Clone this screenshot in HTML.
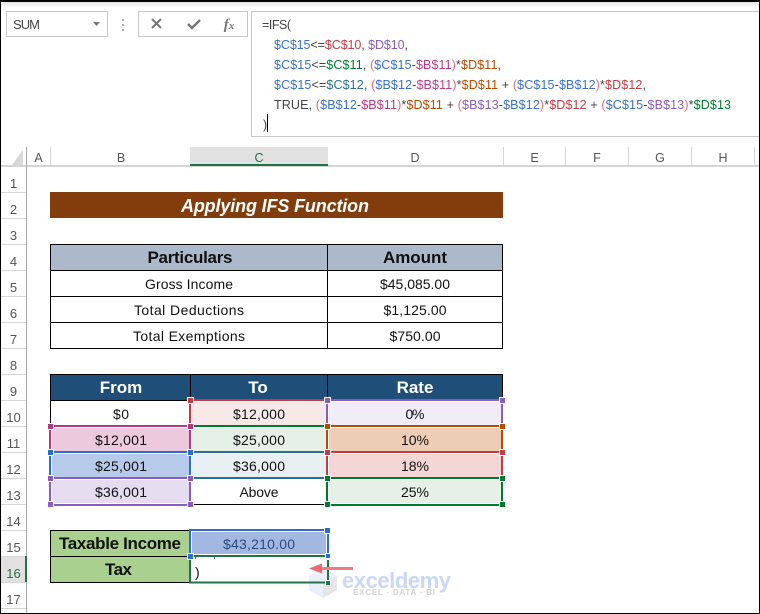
<!DOCTYPE html>
<html><head><meta charset="utf-8"><style>
html,body{margin:0;padding:0;background:#fff;width:760px;height:614px;overflow:hidden}
svg{display:block}
text{font-family:"Liberation Sans",sans-serif;font-size:14px;fill:#111;text-anchor:middle}
.h{font-weight:bold;font-size:17px}
.w{fill:#fff}
.r{fill:#555;font-size:13px}
.c{fill:#555;font-size:12.5px}
.f{font-size:12.5px;text-anchor:start;fill:#444}
.b{fill:#3b6fd0}.rd{fill:#cc3a45}.p{fill:#8a5cc0}.g{fill:#007a2e}.m{fill:#b83a86}.o{fill:#b84a00}.t{fill:#2a7090}.pk{fill:#d9707a}
.hd{stroke:#fff;stroke-width:1}
</style></head><body>
<svg width="760" height="614" viewBox="0 0 760 614" xmlns="http://www.w3.org/2000/svg">
<defs><linearGradient id="tg" x1="0" y1="0" x2="0" y2="1"><stop offset="0" stop-color="#e4e4e4"/><stop offset="1" stop-color="#fff"/></linearGradient></defs>
<rect width="760" height="614" fill="#fff"/>
<rect x="0" y="2" width="760" height="6" fill="url(#tg)"/>
<!-- formula bar -->
<rect x="6.5" y="11.5" width="101" height="25" fill="#fff" stroke="#c6c6c6"/>
<text x="13" y="29" style="text-anchor:start;fill:#444;font-size:13px" textLength="27">SUM</text>
<path d="M93 22h7l-3.500 4z" fill="#777"/>
<rect x="122" y="19" width="2" height="2" fill="#aaa"/><rect x="122" y="24" width="2" height="2" fill="#aaa"/><rect x="122" y="29" width="2" height="2" fill="#aaa"/>
<rect x="138.500" y="11.500" width="109" height="25" fill="#fff" stroke="#c6c6c6"/>
<path d="M152 19l9 9M161 19l-9 9" stroke="#777" stroke-width="2" fill="none"/>
<path d="M188 24l4 4 8-8" stroke="#777" stroke-width="2.500" fill="none"/>
<text x="229" y="29" style="font-family:'Liberation Serif',serif;font-style:italic;font-weight:bold;font-size:15px;fill:#777">f<tspan style="font-size:11px;font-family:'Liberation Serif',serif;fill:#777">x</tspan></text>
<rect x="251.500" y="11.500" width="520" height="125" fill="#fff" stroke="#c6c6c6"/>
<text class="f" x="262" y="29" textLength="29">=IFS(</text>
<text class="f" x="274" y="49" textLength="134"><tspan class="b">$C$15</tspan>&lt;=<tspan class="rd">$C$10</tspan>, <tspan class="p">$D$10</tspan>,</text>
<text class="f" x="274" y="69" textLength="227"><tspan class="b">$C$15</tspan>&lt;=<tspan class="g">$C$11</tspan>, <tspan class="pk">(</tspan><tspan class="b">$C$15</tspan>-<tspan class="m">$B$11</tspan><tspan class="pk">)</tspan>*<tspan class="o">$D$11</tspan>,</text>
<text class="f" x="274" y="89" textLength="372"><tspan class="b">$C$15</tspan>&lt;=<tspan class="t">$C$12</tspan>, <tspan class="pk">(</tspan><tspan class="b">$B$12</tspan>-<tspan class="m">$B$11</tspan><tspan class="pk">)</tspan>*<tspan class="o">$D$11</tspan> + <tspan class="pk">(</tspan><tspan class="b">$C$15</tspan>-<tspan class="b">$B$12</tspan><tspan class="pk">)</tspan>*<tspan class="rd">$D$12</tspan>,</text>
<text class="f" x="274" y="109" textLength="457">TRUE, <tspan class="pk">(</tspan><tspan class="b">$B$12</tspan>-<tspan class="m">$B$11</tspan><tspan class="pk">)</tspan>*<tspan class="o">$D$11</tspan> + <tspan class="pk">(</tspan><tspan class="p">$B$13</tspan>-<tspan class="b">$B$12</tspan><tspan class="pk">)</tspan>*<tspan class="rd">$D$12</tspan> + <tspan class="pk">(</tspan><tspan class="b">$C$15</tspan>-<tspan class="p">$B$13</tspan><tspan class="pk">)</tspan>*<tspan class="g">$D$13</tspan></text>
<text class="f" x="263" y="129">)</text>
<rect x="267" y="114" width="1" height="18" fill="#000"/>
<!-- column headers -->
<path d="M23 150v15h-11z" fill="#d8d8d8"/>
<rect x="190" y="147" width="138" height="18" fill="#e1e1e1"/>
<path d="M50.500 147v18M503.500 147v18M565.500 147v18M628.500 147v18M691.500 147v18M754.500 147v18" stroke="#d6d6d6"/>
<rect x="0" y="165.500" width="760" height="1" fill="#a8a8a8"/>
<rect x="190" y="164" width="138" height="2" fill="#217346"/>
<text class="c" x="38.500" y="162">A</text><text class="c" x="121" y="162">B</text><text class="c" x="259" y="162" style="fill:#217346">C</text><text class="c" x="415" y="162">D</text><text class="c" x="534.500" y="162">E</text><text class="c" x="597" y="162">F</text><text class="c" x="660" y="162">G</text><text class="c" x="723" y="162">H</text>
<!-- row headers -->
<rect x="1" y="556" width="25" height="26" fill="#e1e1e1"/>
<path d="M1 192.500h25M1 218.500h25M1 244.500h25M1 270.500h25M1 296.500h25M1 322.500h25M1 348.500h25M1 374.500h25M1 400.500h25M1 426.500h25M1 452.500h25M1 478.500h25M1 504.500h25M1 530.500h25M1 556.500h25M1 582.500h25M1 608.500h25" stroke="#d6d6d6"/>
<rect x="26" y="147" width="1" height="466" fill="#a8a8a8"/>
<rect x="25" y="556" width="2" height="26" fill="#217346"/>
<text class="r" x="13.500" y="188">1</text><text class="r" x="13.500" y="214">2</text><text class="r" x="13.500" y="240">3</text><text class="r" x="13.500" y="266">4</text><text class="r" x="13.500" y="292">5</text><text class="r" x="13.500" y="318">6</text><text class="r" x="13.500" y="344">7</text><text class="r" x="13.500" y="370">8</text><text class="r" x="13.500" y="396">9</text><text class="r" x="13.500" y="422">10</text><text class="r" x="13.500" y="448">11</text><text class="r" x="13.500" y="474">12</text><text class="r" x="13.500" y="500">13</text><text class="r" x="13.500" y="526">14</text><text class="r" x="13.500" y="552">15</text><text class="r" x="13.500" y="578" style="fill:#217346">16</text><text class="r" x="13.500" y="604">17</text>
<!-- title -->
<rect x="50" y="192" width="453" height="26" fill="#833c0b"/>
<text class="w" x="275" y="212" style="font-weight:bold;font-style:italic;font-size:18px" textLength="188">Applying IFS Function</text>
<!-- table 1 -->
<rect x="50" y="244" width="453" height="26" fill="#acb9ca"/>
<path d="M50.500 244v105M327.500 244v105M502.500 244v105M50 244.500h453M50 270.500h453M50 296.500h453M50 322.500h453M50 348.500h453" stroke="#000" fill="none"/>
<text class="h" x="190" y="263" textLength="85">Particulars</text><text class="h" x="415" y="263" textLength="64">Amount</text>
<text x="189" y="289" textLength="88">Gross Income</text><text x="415" y="289" textLength="70">$45,085.00</text>
<text x="189" y="315" textLength="110">Total Deductions</text><text x="415" y="315" textLength="63">$1,125.00</text>
<text x="189" y="341" textLength="112">Total Exemptions</text><text x="415" y="341" textLength="51">$750.00</text>
<!-- table 2 -->
<rect x="50" y="374" width="453" height="26" fill="#1f4e78"/>
<path d="M50.500 374v131M190.500 374v131M327.500 374v131M502.500 374v131M50 374.500h453M50 400.500h453M50 504.500h453" stroke="#000" fill="none"/>
<!-- fills -->
<rect x="191" y="401" width="136" height="25" fill="#f8e9e9"/>
<rect x="328" y="401" width="174" height="25" fill="#f0edf8"/>
<rect x="51" y="427" width="139" height="25" fill="#ecc9dd"/>
<rect x="191" y="427" width="136" height="25" fill="#e6f0e6"/>
<rect x="328" y="427" width="174" height="25" fill="#eecdb6"/>
<rect x="51" y="453" width="139" height="25" fill="#b8cae9"/>
<rect x="191" y="453" width="136" height="25" fill="#e8f0f4"/>
<rect x="328" y="453" width="174" height="25" fill="#f4d6d6"/>
<rect x="51" y="479" width="139" height="25" fill="#e6dcf0"/>
<rect x="328" y="479" width="174" height="25" fill="#e6f0e6"/>
<!-- white inner lines -->
<path d="M51.500 427.500h138v24h-138zM51.500 453.500h138v24h-138zM51.500 479.500h138v24h-138zM191.500 401.500h135v24h-135zM191.500 427.500h135v24h-135zM191.500 453.500h135v24h-135zM328.500 401.500h173v24h-173zM328.500 427.500h173v24h-173zM328.500 453.500h173v24h-173zM328.500 479.500h173v24h-173z" fill="none" stroke="#fff"/>
<!-- selection borders -->
<rect x="190" y="400" width="137" height="26" fill="none" stroke="#c33b45" stroke-width="2"/>
<rect x="190" y="426" width="137" height="26" fill="none" stroke="#007a2e" stroke-width="2"/>
<rect x="190" y="452" width="137" height="26" fill="none" stroke="#2a7090" stroke-width="2"/>
<path d="M190 478H327" stroke="#2a7090" stroke-width="2"/>
<rect x="327" y="400" width="175" height="26" fill="none" stroke="#8a5cc0" stroke-width="2"/>
<rect x="327" y="426" width="175" height="26" fill="none" stroke="#b84a00" stroke-width="2"/>
<rect x="327" y="452" width="175" height="26" fill="none" stroke="#c33b45" stroke-width="2"/>
<rect x="327" y="478" width="175" height="27" fill="none" stroke="#007a2e" stroke-width="2"/>
<rect x="50" y="426" width="140" height="26" fill="none" stroke="#b03a80" stroke-width="2"/>
<rect x="50" y="452" width="140" height="26" fill="none" stroke="#2f6bcb" stroke-width="2"/>
<rect x="50" y="478" width="140" height="27" fill="none" stroke="#8a5cc0" stroke-width="2"/>
<!-- handles -->
<rect class="hd" x="187.500" y="397.500" width="6" height="6" fill="#c33b45"/>
<rect class="hd" x="47.500" y="423.500" width="6" height="6" fill="#b03a80"/>
<rect class="hd" x="187.500" y="423.500" width="6" height="6" fill="#b03a80"/>
<rect class="hd" x="47.500" y="449.500" width="6" height="6" fill="#2f6bcb"/>
<rect class="hd" x="187.500" y="449.500" width="6" height="6" fill="#2f6bcb"/>
<rect class="hd" x="47.500" y="475.500" width="6" height="6" fill="#8a5cc0"/>
<rect class="hd" x="187.500" y="475.500" width="6" height="6" fill="#8a5cc0"/>
<rect class="hd" x="47.500" y="501.500" width="6" height="6" fill="#8a5cc0"/>
<rect class="hd" x="187.500" y="501.500" width="6" height="6" fill="#8a5cc0"/>
<rect class="hd" x="324.500" y="397.500" width="6" height="6" fill="#8a5cc0"/>
<rect class="hd" x="499.500" y="397.500" width="6" height="6" fill="#8a5cc0"/>
<rect class="hd" x="324.500" y="423.500" width="6" height="6" fill="#b84a00"/>
<rect class="hd" x="499.500" y="423.500" width="6" height="6" fill="#b84a00"/>
<rect class="hd" x="324.500" y="449.500" width="6" height="6" fill="#c33b45"/>
<rect class="hd" x="499.500" y="449.500" width="6" height="6" fill="#c33b45"/>
<rect class="hd" x="324.500" y="475.500" width="6" height="6" fill="#007a2e"/>
<rect class="hd" x="499.500" y="475.500" width="6" height="6" fill="#007a2e"/>
<rect class="hd" x="324.500" y="501.500" width="6" height="6" fill="#007a2e"/>
<rect class="hd" x="499.500" y="501.500" width="6" height="6" fill="#007a2e"/>
<!-- table 2 text -->
<text class="h w" x="121" y="393">From</text><text class="h w" x="258" y="393">To</text><text class="h w" x="415" y="393">Rate</text>
<text x="121" y="419" textLength="16">$0</text><text x="259" y="419" textLength="52">$12,000</text><text x="415" y="419" textLength="19">0%</text>
<text x="121" y="445" textLength="52">$12,001</text><text x="259" y="445" textLength="52">$25,000</text><text x="415" y="445" textLength="28">10%</text>
<text x="121" y="471" textLength="52">$25,001</text><text x="259" y="471" textLength="52">$36,000</text><text x="415" y="471" textLength="28">18%</text>
<text x="121" y="497" textLength="52">$36,001</text><text x="259" y="497" textLength="39">Above</text><text x="415" y="497" textLength="28">25%</text>
<!-- tax table -->
<rect x="50" y="530" width="140" height="52" fill="#a9d08e"/>
<path d="M50.500 530v53M50 530.500h140M50 556.500h140M50 582.500h140" stroke="#000" fill="none"/>
<text class="h" x="120" y="549" textLength="122">Taxable Income</text>
<text class="h" x="118.500" y="575" textLength="27">Tax</text>
<rect x="191" y="531" width="136" height="25" fill="#a2b8e0"/>
<path d="M191.500 531.500h135v23h-135z" fill="none" stroke="#fff"/>
<rect x="190" y="530" width="138" height="26" fill="none" stroke="#2f6bcb" stroke-width="2"/>
<text x="259" y="549" textLength="72" style="fill:#2f4a80">$43,210.00</text>
<path d="M195.500 557v2M214.500 557v2" stroke="#2f6bcb"/>
<text x="195" y="577" style="text-anchor:start;font-size:14px">)</text>
<!-- watermark -->
<g opacity=".6">
<path d="M323 568l14 8v14l-14 8-14-8v-14z" fill="#dde6f8"/>
<path d="M323 582l14-6v14l-14 8z" fill="#d6d6d6"/>
<path d="M323 582l-14-6v14l14 8z" fill="#dbe5f9"/>
</g>
<text x="342" y="588" style="text-anchor:start;font-weight:bold;font-size:22px;fill:#c9d8f8" textLength="109">exceldemy</text>
<text x="353" y="595" style="text-anchor:start;font-weight:bold;font-size:8px;fill:#d2d2d2" textLength="82">EXCEL · DATA · BI</text>
<!-- active cell -->
<path d="M190 560v22.500H328V560" fill="none" stroke="#217346" stroke-width="2"/>
<path d="M190 556H328" stroke="#217346" stroke-width="2"/>
<rect class="hd" x="187.500" y="553.500" width="6" height="6" fill="#2f6bcb"/>
<rect class="hd" x="324.500" y="527.500" width="6" height="6" fill="#2f6bcb"/>
<rect class="hd" x="325.500" y="553.500" width="5" height="5" fill="#2f6bcb"/>
<rect class="hd" x="325.500" y="580.500" width="5" height="5" fill="#217346"/>
<path d="M353 568.500H319" stroke="#ef7c82" stroke-width="3"/>
<path d="M309 568.500l13-5v10z" fill="#ef6a70"/>
<!-- frame -->
<rect x="0" y="0" width="760" height="2" fill="#000"/>
<rect x="0" y="0" width="1" height="614" fill="#000"/>
<rect x="759" y="0" width="1" height="614" fill="#000"/>
<rect x="0" y="613" width="760" height="1" fill="#000"/>
</svg>
</body></html>
